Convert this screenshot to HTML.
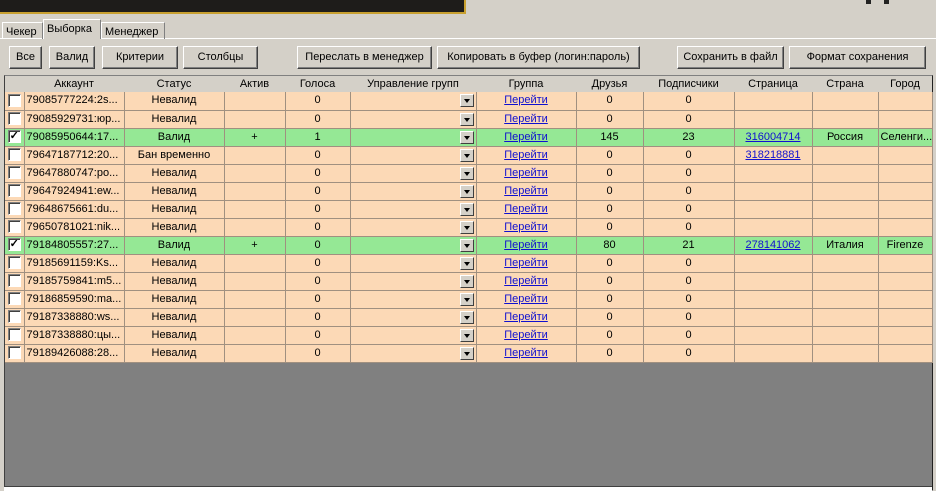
<!DOCTYPE html><html><head><meta charset="utf-8"><style>
*{box-sizing:border-box;margin:0;padding:0}
body{width:936px;height:491px;background:#d4d0c8;font-family:"Liberation Sans",sans-serif;font-size:11px;position:relative;overflow:hidden;color:#000}
.top{position:absolute;left:0;top:0;width:466px;height:14px;background:#1e1c1a;border-right:2px solid #c8a030;border-bottom:2px solid #c8a030}
.tr{position:absolute;left:866px;top:0;width:30px;height:4px}
.tr i{position:absolute;top:0;width:5px;height:4px;background:#222}
.tab{position:absolute;top:21px;height:17px;border:1px solid #fff;border-right-color:#808080;border-bottom:none;padding:3px 3px 0;line-height:12px}
.line{position:absolute;left:0;top:38px;width:936px;height:1px;background:#fff}
.btn{position:absolute;top:46px;height:23px;background:#d4d0c8;border:1px solid;border-color:#fff #404040 #404040 #fff;box-shadow:inset -1px -1px #808080;text-align:center;line-height:21px}
.grid{position:absolute;left:4px;top:75px;width:929px;height:416px;background:#808080;border:1px solid;border-color:#808080 #202020 #fff #404040}
table{border-collapse:collapse;table-layout:fixed;width:927px;position:absolute;left:0;top:0}
td{height:18px;border:1px solid #a09080;border-top:none;border-left:none;text-align:center;white-space:nowrap;overflow:hidden;padding:0 2px;line-height:17px}
tr.h td{background:#d4d0c8;height:16px;border:none;line-height:16px}
tr.p td{background:#fcd9b6}
tr.g td{background:#95e895}
td.a{text-align:left}
.cb{display:inline-block;width:13px;height:13px;background:#fff;border:1px solid;border-color:#808080 #fff #fff #808080;box-shadow:inset 1px 1px #404040;vertical-align:middle;position:relative;font-size:11px;line-height:10px;font-weight:bold;text-align:center}
.dd{position:relative}
.dd b{position:absolute;right:2px;top:2px;width:14px;height:13px;background:#d4d0c8;border:1px solid;border-color:#fff #404040 #404040 #fff}
.dd b:after{content:"";position:absolute;left:3px;top:4px;border:3px solid transparent;border-top:4px solid #000;border-bottom:none}
a{color:#1010d0;text-decoration:underline}
.sb{position:absolute;left:4px;top:486px;width:928px;height:5px;background:#fff;border-top:1px solid #404040}
</style></head><body>
<div class="top"></div>
<div class="tr"><i style="left:0"></i><i style="left:18px"></i></div>
<div class="line"></div>
<div class="tab" style="left:2px;width:41px;top:22px">Чекер</div>
<div class="tab" style="left:43px;width:58px;top:19px;height:20px;background:#d4d0c8;border-left-color:#fff">Выборка</div>
<div class="tab" style="left:101px;width:64px;top:22px">Менеджер</div>
<div class="btn" style="left:9px;width:33px">Все</div>
<div class="btn" style="left:49px;width:46px">Валид</div>
<div class="btn" style="left:102px;width:76px">Критерии</div>
<div class="btn" style="left:183px;width:75px">Столбцы</div>
<div class="btn" style="left:297px;width:135px">Переслать в менеджер</div>
<div class="btn" style="left:437px;width:203px">Копировать в буфер (логин:пароль)</div>
<div class="btn" style="left:677px;width:107px">Сохранить в файл</div>
<div class="btn" style="left:789px;width:137px">Формат сохранения</div>
<div class="grid"><table>
<colgroup><col style="width:19px"><col style="width:100px"><col style="width:100px"><col style="width:61px"><col style="width:65px"><col style="width:126px"><col style="width:100px"><col style="width:67px"><col style="width:91px"><col style="width:78px"><col style="width:66px"><col style="width:54px"></colgroup>
<tr class="h"><td></td><td>Аккаунт</td><td>Статус</td><td>Актив</td><td>Голоса</td><td>Управление групп</td><td>Группа</td><td>Друзья</td><td>Подписчики</td><td>Страница</td><td>Страна</td><td>Город</td></tr>
<tr class="p"><td><span class="cb"></span></td><td class="a">79085777224:2s...</td><td>Невалид</td><td></td><td>0</td><td class="dd"><b></b></td><td><a>Перейти</a></td><td>0</td><td>0</td><td></td><td></td><td></td></tr>
<tr class="p"><td><span class="cb"></span></td><td class="a">79085929731:юр...</td><td>Невалид</td><td></td><td>0</td><td class="dd"><b></b></td><td><a>Перейти</a></td><td>0</td><td>0</td><td></td><td></td><td></td></tr>
<tr class="g"><td><span class="cb">✓</span></td><td class="a">79085950644:17...</td><td>Валид</td><td>+</td><td>1</td><td class="dd"><b></b></td><td><a>Перейти</a></td><td>145</td><td>23</td><td><a>316004714</a></td><td>Россия</td><td>Селенги...</td></tr>
<tr class="p"><td><span class="cb"></span></td><td class="a">79647187712:20...</td><td>Бан временно</td><td></td><td>0</td><td class="dd"><b></b></td><td><a>Перейти</a></td><td>0</td><td>0</td><td><a>318218881</a></td><td></td><td></td></tr>
<tr class="p"><td><span class="cb"></span></td><td class="a">79647880747:po...</td><td>Невалид</td><td></td><td>0</td><td class="dd"><b></b></td><td><a>Перейти</a></td><td>0</td><td>0</td><td></td><td></td><td></td></tr>
<tr class="p"><td><span class="cb"></span></td><td class="a">79647924941:ew...</td><td>Невалид</td><td></td><td>0</td><td class="dd"><b></b></td><td><a>Перейти</a></td><td>0</td><td>0</td><td></td><td></td><td></td></tr>
<tr class="p"><td><span class="cb"></span></td><td class="a">79648675661:du...</td><td>Невалид</td><td></td><td>0</td><td class="dd"><b></b></td><td><a>Перейти</a></td><td>0</td><td>0</td><td></td><td></td><td></td></tr>
<tr class="p"><td><span class="cb"></span></td><td class="a">79650781021:nik...</td><td>Невалид</td><td></td><td>0</td><td class="dd"><b></b></td><td><a>Перейти</a></td><td>0</td><td>0</td><td></td><td></td><td></td></tr>
<tr class="g"><td><span class="cb">✓</span></td><td class="a">79184805557:27...</td><td>Валид</td><td>+</td><td>0</td><td class="dd"><b></b></td><td><a>Перейти</a></td><td>80</td><td>21</td><td><a>278141062</a></td><td>Италия</td><td>Firenze</td></tr>
<tr class="p"><td><span class="cb"></span></td><td class="a">79185691159:Ks...</td><td>Невалид</td><td></td><td>0</td><td class="dd"><b></b></td><td><a>Перейти</a></td><td>0</td><td>0</td><td></td><td></td><td></td></tr>
<tr class="p"><td><span class="cb"></span></td><td class="a">79185759841:m5...</td><td>Невалид</td><td></td><td>0</td><td class="dd"><b></b></td><td><a>Перейти</a></td><td>0</td><td>0</td><td></td><td></td><td></td></tr>
<tr class="p"><td><span class="cb"></span></td><td class="a">79186859590:ma...</td><td>Невалид</td><td></td><td>0</td><td class="dd"><b></b></td><td><a>Перейти</a></td><td>0</td><td>0</td><td></td><td></td><td></td></tr>
<tr class="p"><td><span class="cb"></span></td><td class="a">79187338880:ws...</td><td>Невалид</td><td></td><td>0</td><td class="dd"><b></b></td><td><a>Перейти</a></td><td>0</td><td>0</td><td></td><td></td><td></td></tr>
<tr class="p"><td><span class="cb"></span></td><td class="a">79187338880:цы...</td><td>Невалид</td><td></td><td>0</td><td class="dd"><b></b></td><td><a>Перейти</a></td><td>0</td><td>0</td><td></td><td></td><td></td></tr>
<tr class="p"><td><span class="cb"></span></td><td class="a">79189426088:28...</td><td>Невалид</td><td></td><td>0</td><td class="dd"><b></b></td><td><a>Перейти</a></td><td>0</td><td>0</td><td></td><td></td><td></td></tr>
</table></div>
<div class="sb"></div>
</body></html>
